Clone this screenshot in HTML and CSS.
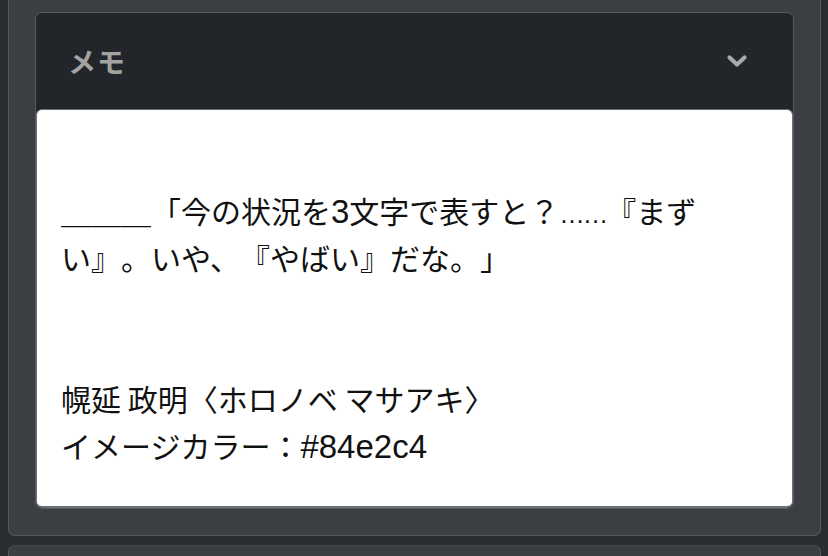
FILE: index.html
```html
<!DOCTYPE html>
<html lang="ja">
<head>
<meta charset="utf-8">
<link rel="stylesheet" href="styles.css">
</head>
<body>
<div class="page">
  <section class="panel">
    <div class="card">
      <header class="card-head">
        <span class="card-title">メモ</span>
        <svg class="chevron" width="22" height="14" viewBox="0 0 22 14"><polyline points="3.5,3.5 11,10.5 18.5,3.5" fill="none" stroke="#a9a9a9" stroke-width="4.2" stroke-linecap="round" stroke-linejoin="round"/></svg>
      </header>
      <div class="card-body">
        <p class="line">&nbsp;</p>
        <p class="line">＿＿＿「今の状況を<span class="latin">3</span>文字で表すと？<span class="latin dots">……</span>『まずい』。いや、『やばい』だな。」</p>
        <p class="line">&nbsp;</p>
        <p class="line">&nbsp;</p>
        <p class="line">幌延 政明〈ホロノベ マサアキ〉</p>
        <p class="line">イメージカラー：<span class="latin">#84e2c4</span></p>
      </div>
    </div>
  </section>
  <section class="panel panel-next"></section>
</div>
</body>
</html>
```

FILE: styles.css
```css
html, body {
  margin: 0;
  padding: 0;
}
body {
  background: #2a2d32;
  height: 556px;
  overflow: hidden;
  font-family: "Noto Sans CJK JP", sans-serif;
}
.page {
  padding: 0 7px 0 8px;
  display: flex;
  flex-direction: column;
  gap: 9px;
}
.panel {
  background: #3b3e43;
  border: 1px solid #55585e;
  border-top: none;
  border-radius: 0 0 7px 7px;
  padding: 12px 26px 26px 26px;
}
.panel-next {
  border-radius: 7px 7px 0 0;
  border-top: 1px solid #44474c;
  border-bottom: none;
  height: 10px;
  padding: 0;
}
.card {
  background: #222529;
  border: 1px solid #585b61;
  border-radius: 7px;
  overflow: hidden;
}
.card-head {
  height: 96px;
  display: flex;
  align-items: center;
  justify-content: space-between;
  padding: 0 45px 0 32px;
}
.card-title {
  color: #a3a3a3;
  font-size: 28px;
  font-weight: 700;
  letter-spacing: 1px;
}
.chevron {
  display: block;
}
.card-body {
  background: #ffffff;
  border: 1px solid #6c6f74;
  border-bottom-width: 2px;
  border-radius: 6px;
  padding: 30px 36px 37px 24px;
  color: #111111;
  font-size: 30px;
  line-height: 47px;
  text-spacing-trim: space-all;
}
.line {
  margin: 0;
  height: 47px;
  white-space: nowrap;
}
.line:nth-child(2) {
  height: auto;
  white-space: normal;
}
.latin {
  font-family: "Liberation Sans", sans-serif;
  font-size: 1.1em;
  line-height: 1;
}
.dots {
  font-size: 0.85em;
  letter-spacing: -2px;
}
```
